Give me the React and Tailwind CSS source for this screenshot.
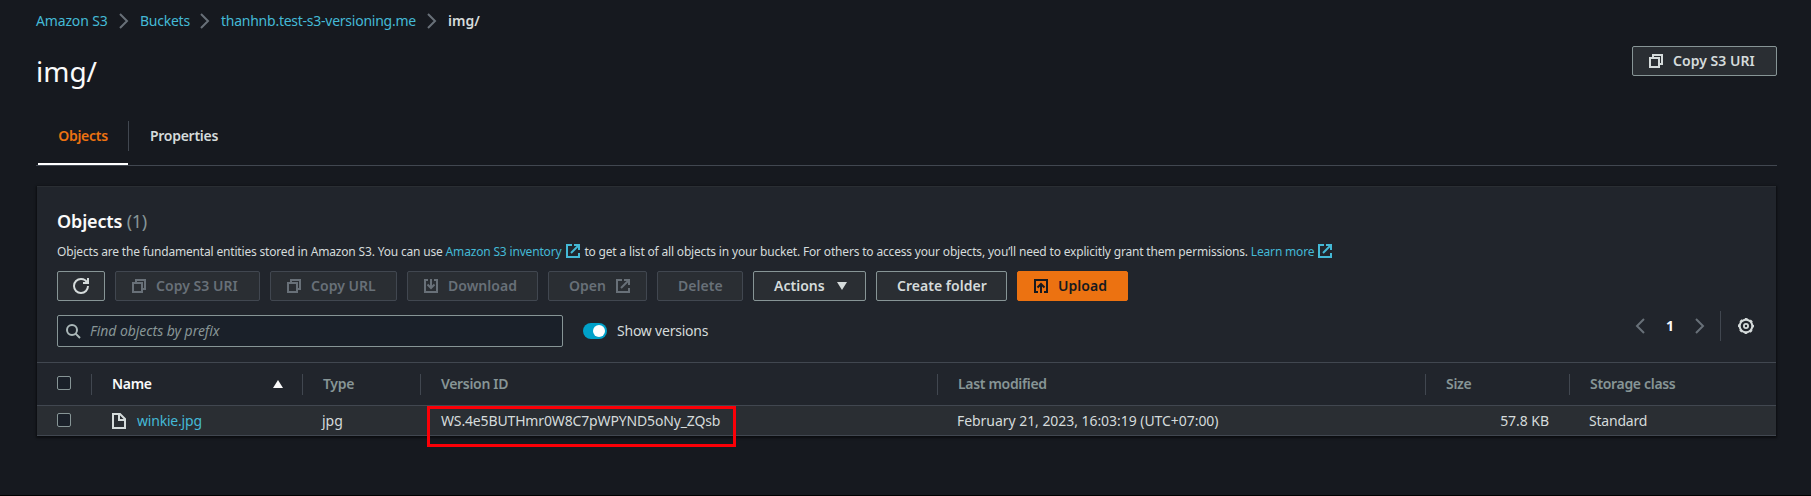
const icons = {
  copy: (
    <>
      <path d="M2 5h9v9H2z" />
      <path d="M5 5V2h9v9h-3" />
    </>
  ),
  external: (
    <>
      <path d="M7 2H2v12h12v-4" />
      <path d="M9 2h5v5" />
      <path d="M6 10l8-8" />
    </>
  ),
  download: (
    <>
      <path d="M5 2H2v12h12V2h-3" />
      <path d="M8 1v9" />
      <path d="M4.500 6.500L8 10l3.500-3.500" />
    </>
  ),
  upload: (
    <>
      <path d="M5 14H2V2h12v12h-3" />
      <path d="M8 15V6" />
      <path d="M4.500 9.500L8 6l3.500 3.500" />
    </>
  ),
  refresh: (
    <>
      <path d="M10 5h5V0" />
      <path d="M15 8a6.957 6.957 0 0 1-7 7 6.957 6.957 0 0 1-7-7 6.957 6.957 0 0 1 7-7 6.870 6.870 0 0 1 6.300 4" />
    </>
  ),
  search: (
    <>
      <circle cx="7" cy="7" r="5" />
      <path d="M10.600 10.600L15 15" />
    </>
  ),
  file: (
    <>
      <path d="M2 1h7l5 5v9H2z" />
      <path d="M8 1v6h6" />
    </>
  ),
  right: <path d="M4 1l7 7-7 7" />,
  left: <path d="M12 1L5 8l7 7" />,
  gear: (
    <>
      <circle cx="8" cy="8" r="6.300" />
      <circle cx="8" cy="8" r="7.300" strokeWidth="1.400" strokeDasharray="2.867 2.867" strokeDashoffset="1.430" />
      <circle cx="8" cy="8" r="2.100" strokeWidth="1.800" />
    </>
  ),
};

function Icon({ name, className = "" }) {
  return (
    <svg viewBox="0 0 16 16" width="16" height="16" fill="none" stroke="currentColor" strokeWidth="2" className={"shrink-0 " + className}>
      {icons[name]}
    </svg>
  );
}

function Button({ icon, tone = "normal", className = "", children }) {
  const tones = {
    normal: "border-[#879596] bg-[#2a2e33] text-[#d5dbdb]",
    disabled: "border-[#414750] bg-[#2a2e33] text-[#687078]",
    primary: "border-[#ec7211] bg-[#ec7211] text-[#16191f]",
  };
  return (
    <button className={`flex h-[30px] shrink-0 items-center whitespace-nowrap rounded-[2px] border font-[650] tracking-[0.03px] ${icon ? "pl-[15px]" : "pl-[20px]"} ${tones[tone]} ${className}`}>
      {icon && <Icon name={icon} className="mr-[9px]" />}
      {children}
    </button>
  );
}

function HeaderCell({ children, last, className = "" }) {
  return (
    <div className={`flex h-[21px] items-center pl-5 font-semibold tracking-[-0.32px] ${last ? "" : "border-r border-[#414750]"} ${className}`}>
      {children}
    </div>
  );
}

const columns = "grid grid-cols-[55px_211px_118px_517px_488px_144px_1fr] items-center";

const crumbs = [
  { label: "Amazon S3", width: "w-[80px] tracking-[-0.15px]" },
  { label: "Buckets", width: "w-[57px] tracking-[-0.25px]" },
  { label: "thanhnb.test-s3-versioning.me", width: "w-[203px] tracking-[-0.25px]" },
];

export default function App() {
  return (
    <div className="flex h-[496px] w-[1811px] flex-col overflow-hidden border-b border-black bg-[#16191f] pl-9 pr-[34px] font-['Noto_Sans',sans-serif] text-[14px] leading-[22px] text-[#d5dbdb]">
      <nav className="flex h-[22px] shrink-0 items-center mt-[10px]">
        {crumbs.map((c) => (
          <div key={c.label} className="flex items-center">
            <a className={`whitespace-nowrap text-[#44b9d6] ${c.width}`}>{c.label}</a>
            <Icon name="right" className="mr-2 text-[#687078]" />
          </div>
        ))}
        <span className="font-semibold">img/</span>
      </nav>

      <header className="mt-[14px] flex h-[50px] shrink-0 justify-between">
        <h1 className="mt-[7px] text-[28px] leading-[36px] text-[#fafafa]">img/</h1>
        <Button icon="copy" className="w-[145px]">Copy S3 URI</Button>
      </header>

      <div className="mt-[25px] flex h-[45px] shrink-0 border-b border-[#414750]">
        <div className="ml-[2px] flex w-[90px] justify-center border-b-2 border-white pt-[4px] font-[650] tracking-[-0.28px] text-[#ec7211]">Objects</div>
        <div className="h-[30px] w-px bg-[#414750]" />
        <div className="pl-[21px] pt-[4px] font-[650] tracking-[-0.28px]">Properties</div>
      </div>

      <section className="ml-px mr-px mt-5 h-[250px] shrink-0 border-t border-[#2a2e33] bg-[#21252c] shadow-[0_1px_2px_1px_rgba(0,0,0,0.5)]">
        <div className="flex h-[175px] flex-col px-5">
          <h2 className="mt-[23px] text-[18px] font-semibold leading-[22px] tracking-[-0.15px] text-[#fafafa]">
            Objects <span className="font-normal tracking-[-0.3px] text-[#879596]">(1)</span>
          </h2>
          <p className="relative top-px mt-[10px] flex h-[18px] items-center whitespace-pre text-[12px] leading-[18px] tracking-[-0.175px]">
            Objects are the fundamental entities stored in Amazon S3. You can use <a className="text-[#44b9d6]">Amazon S3 inventory</a>
            <Icon name="external" className="relative -top-px ml-[4px] mr-[3px] text-[#44b9d6]" />
            to get a list of all objects in your bucket. For others to access your objects, you’ll need to explicitly grant them permissions. <a className="text-[#44b9d6]">Learn more</a>
            <Icon name="external" className="relative -top-px ml-[3px] text-[#44b9d6]" />
          </p>
          <div className="mt-[11px] flex gap-[10px]">
            <button className="flex h-[30px] w-[48px] items-center justify-center rounded-[2px] border border-[#879596] bg-[#2a2e33]">
              <Icon name="refresh" />
            </button>
            <Button icon="copy" tone="disabled" className="w-[145px]">Copy S3 URI</Button>
            <Button icon="copy" tone="disabled" className="w-[127px]">Copy URL</Button>
            <Button icon="download" tone="disabled" className="w-[131px]">Download</Button>
            <Button tone="disabled" className="w-[99px]">
              Open
              <Icon name="external" className="ml-auto mr-[15px]" />
            </Button>
            <Button tone="disabled" className="w-[86px]">Delete</Button>
            <Button className="w-[113px]">
              Actions
              <svg viewBox="0 0 10 8" className="ml-auto mr-[18px] h-2 w-[10px] fill-current"><path d="M0 0h10L5 8z" /></svg>
            </Button>
            <Button className="w-[131px]">Create folder</Button>
            <Button icon="upload" tone="primary" className="w-[111px]">Upload</Button>
          </div>
          <div className="mt-[10px] flex h-8 items-center">
            <div className="mt-[8px] flex h-8 w-[506px] shrink-0 items-center rounded-[2px] border border-[#879596] bg-[#1a2029] pl-[7px] italic tracking-[-0.05px] text-[#879596]">
              <Icon name="search" className="mr-[9px] text-[#aab7b8]" />
              Find objects by prefix
            </div>
            <div className="ml-5 mt-[8px] flex h-4 w-6 justify-end rounded-full bg-[#00a1c9] p-[2px]">
              <div className="size-3 rounded-full bg-white" />
            </div>
            <span className="ml-[10px] mt-[8px] tracking-[-0.22px]">Show versions</span>
            <div className="mb-[2px] ml-auto flex h-[30px] items-center pr-[2px]">
              <Icon name="left" className="text-[#687078]" />
              <span className="w-[44px] text-center font-bold text-[#fafafa]">1</span>
              <Icon name="right" className="text-[#687078]" />
              <div className="ml-[12px] h-[30px] w-px bg-[#414750]" />
              <Icon name="gear" className="ml-[17px]" />
            </div>
          </div>
        </div>

        <div className={`h-[44px] border-y border-[#414750] text-[#879596] ${columns}`}>
          <HeaderCell>
            <div className="-mt-[2px] size-[14px] rounded-[2px] border border-[#879596] bg-[#1a2029]" />
          </HeaderCell>
          <HeaderCell className="justify-between pr-[19px] text-[#fafafa]">
            Name
            <svg viewBox="0 0 10 8" className="h-2 w-[10px] fill-current"><path d="M0 8h10L5 0z" /></svg>
          </HeaderCell>
          <HeaderCell>Type</HeaderCell>
          <HeaderCell>Version ID</HeaderCell>
          <HeaderCell>Last modified</HeaderCell>
          <HeaderCell>Size</HeaderCell>
          <HeaderCell last>Storage class</HeaderCell>
        </div>

        <div className={`h-[30px] border-b border-[#414750] bg-[#2a2e33] ${columns}`}>
          <div className="pb-px pl-5">
            <div className="size-[14px] rounded-[2px] border border-[#879596] bg-[#1a2029]" />
          </div>
          <div className="flex items-center pl-[19px]">
            <Icon name="file" className="mr-[10px]" />
            <a className="tracking-[-0.2px] text-[#44b9d6]">winkie.jpg</a>
          </div>
          <div className="pl-[19px]">jpg</div>
          <div className="relative pl-[20px] tracking-[-0.15px]">
            WS.4e5BUTHmr0W8C7pWPYND5oNy_ZQsb
            <div className="absolute -top-[4px] left-[6px] h-[41px] w-[309px] border-[3px] border-[#fb0007]" />
          </div>
          <div className="pl-[19px] tracking-[-0.05px]">February 21, 2023, 16:03:19 (UTC+07:00)</div>
          <div className="pr-[21px] text-right tracking-[-0.05px]">57.8 KB</div>
          <div className="pl-[19px] tracking-[-0.2px]">Standard</div>
        </div>
      </section>
    </div>
  );
}
